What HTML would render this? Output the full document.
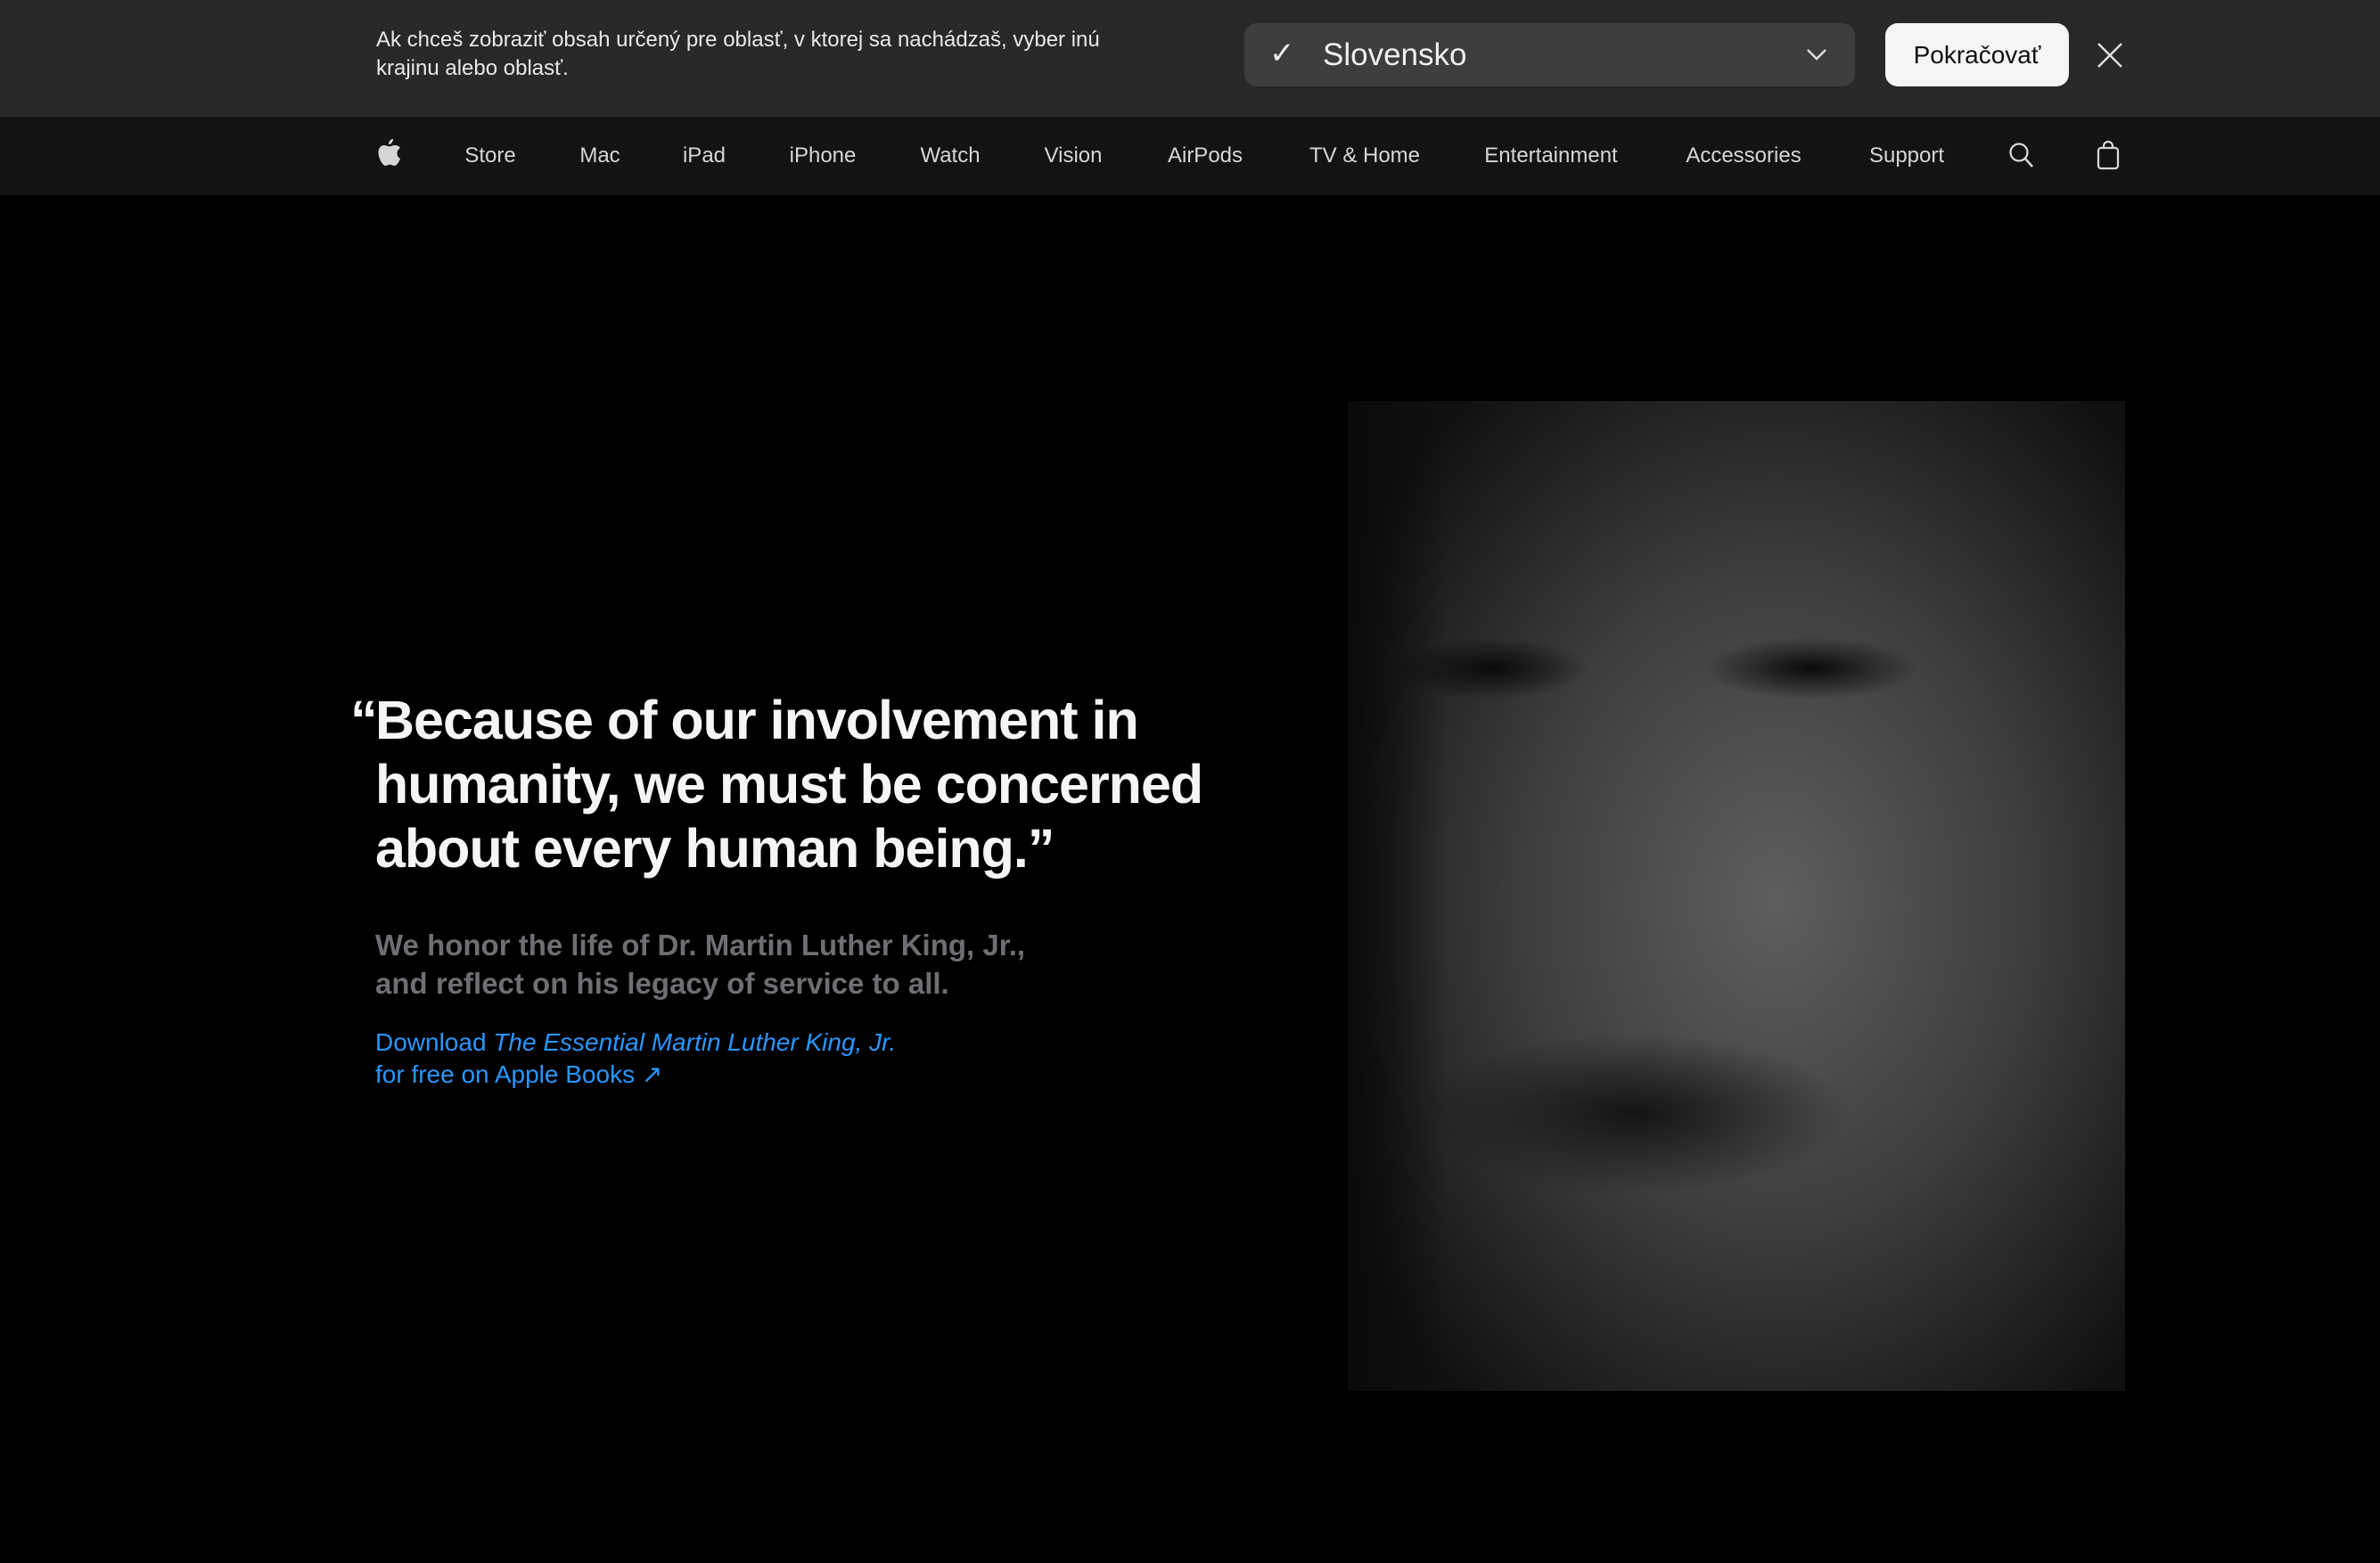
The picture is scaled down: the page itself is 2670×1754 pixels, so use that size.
<!DOCTYPE html>
<html><head><meta charset="utf-8"><style>
*{margin:0;padding:0;box-sizing:border-box}
body{width:2670px;height:1754px;background:#000;font-family:"Liberation Sans",sans-serif;position:relative;overflow:hidden;color:#fff}
.ban{position:absolute;left:0;top:0;width:2670px;height:131px;background:#282828}
.bt{position:absolute;left:422px;top:29px;font-size:24px;line-height:32px;color:#e8e8ed}
.sel{position:absolute;left:1396px;top:26px;width:685px;height:71px;background:#3d3d3d;border-radius:14px}
.sel .ck{position:absolute;left:28px;top:14px;font-size:34px;color:#eee}
.sel .t{position:absolute;left:88px;top:16px;font-size:35px;color:#f0f0f0}
.btn{position:absolute;left:2115px;top:26px;width:206px;height:71px;background:#f5f5f7;border-radius:14px;color:#111;font-size:28px;text-align:center;line-height:71px}
.nav{position:absolute;left:0;top:131px;width:2670px;height:88px;background:#131313}
.ni{position:absolute;top:30px;font-size:24px;color:#d6d6d6;transform:translateX(-50%);white-space:nowrap}
.q{position:absolute;left:421px;top:772px;font-size:61px;line-height:72px;font-weight:bold;letter-spacing:-1px;color:#f5f5f7}
.q .o{position:absolute;left:-28px;top:0}
.s{position:absolute;left:421px;top:1039px;font-size:33px;line-height:43px;font-weight:bold;color:#6e6e73}
.l{position:absolute;left:421px;top:1152px;font-size:28px;line-height:36px;color:#2997ff}
.img{position:absolute;left:1512px;top:450px;width:872px;height:1111px;overflow:hidden;
background:
radial-gradient(ellipse 110px 35px at 160px 300px,#0a0a0a 0,rgba(0,0,0,0) 100%),
radial-gradient(ellipse 120px 35px at 520px 300px,#0a0a0a 0,rgba(0,0,0,0) 100%),
radial-gradient(ellipse 240px 90px at 320px 800px,#141414 0,rgba(0,0,0,0) 100%),
radial-gradient(ellipse 560px 720px at 480px 560px,#5e5e5e 0,#3e3e3e 50%,#222 80%,#101010 100%);}
.img:before{content:"";position:absolute;left:0;top:0;width:110px;height:1111px;background:linear-gradient(90deg,#0a0a0a,rgba(10,10,10,0))}
</style></head><body>
<div class="ban">
<div class="bt">Ak chceš zobraziť obsah určený pre oblasť, v ktorej sa nachádzaš, vyber inú<br>krajinu alebo oblasť.</div>
<div class="sel"><span class="ck">✓</span><span class="t">Slovensko</span>
<svg style="position:absolute;left:630px;top:27px" width="24" height="16" viewBox="0 0 24 16"><path d="M2 3l10 10 10-10" stroke="#ddd" stroke-width="2.5" fill="none"/></svg></div>
<div class="btn">Pokračovať</div>
<svg style="position:absolute;left:2352px;top:47px" width="30" height="30" viewBox="0 0 30 30"><path d="M2 2l26 26M28 2L2 28" stroke="#ddd" stroke-width="2.5"/></svg>
</div>
<div class="nav">
<svg style="position:absolute;left:424px;top:24px" width="26" height="32" viewBox="0 0 26 32"><path d="M17 1c0 3-2 6-5 6 0-3 2-6 5-6zM21.5 17c0-4 3-5.5 3.5-6-2-3-5-3-6-3-2.5 0-4 1.3-6 1.3S9 8 7 8C3.5 8 .5 11 .5 16c0 6 4.5 15 8 15 2 0 2.5-1.2 5-1.2s3 1.2 5 1.2c3 0 5.5-5 6.5-8-1-.5-3.5-2-3.5-6z" fill="#d6d6d6"/></svg>
<span class="ni" style="left:550px">Store</span>
<span class="ni" style="left:673px">Mac</span>
<span class="ni" style="left:790px">iPad</span>
<span class="ni" style="left:923px">iPhone</span>
<span class="ni" style="left:1066px">Watch</span>
<span class="ni" style="left:1204px">Vision</span>
<span class="ni" style="left:1352px">AirPods</span>
<span class="ni" style="left:1531px">TV &amp; Home</span>
<span class="ni" style="left:1740px">Entertainment</span>
<span class="ni" style="left:1956px">Accessories</span>
<span class="ni" style="left:2139px">Support</span>
<svg style="position:absolute;left:2253px;top:28px" width="30" height="32" viewBox="0 0 30 32"><circle cx="12" cy="12" r="9.5" stroke="#d6d6d6" stroke-width="2.3" fill="none"/><path d="M19 19l8 9" stroke="#d6d6d6" stroke-width="2.5"/></svg>
<svg style="position:absolute;left:2352px;top:26px" width="26" height="34" viewBox="0 0 26 34"><rect x="2" y="9" width="22" height="23" rx="3" stroke="#d6d6d6" stroke-width="2.3" fill="none"/><path d="M8 9V7a5 5 0 0110 0v2" stroke="#d6d6d6" stroke-width="2.3" fill="none"/></svg>
</div>
<div class="q"><span class="o">“</span>Because of our involvement in<br>humanity, we must be concerned<br>about every human being.”</div>
<div class="s">We honor the life of Dr. Martin Luther King, Jr.,<br>and reflect on his legacy of service to all.</div>
<div class="l">Download <i>The Essential Martin Luther King, Jr.</i><br>for free on Apple Books ↗</div>
<div class="img"></div>
</body></html>
